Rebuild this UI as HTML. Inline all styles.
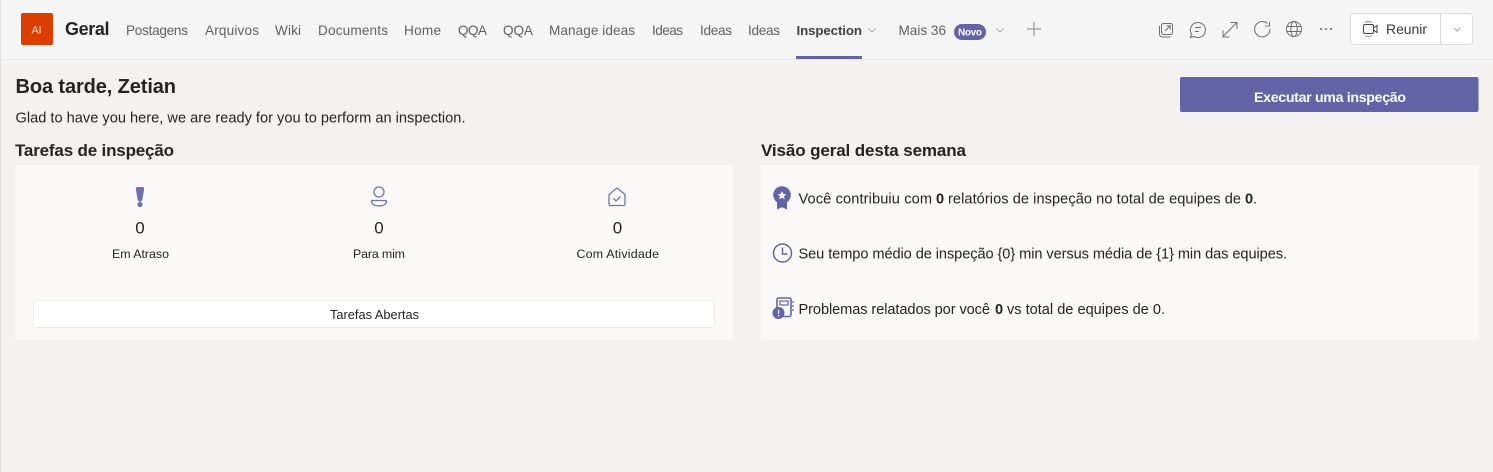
<!DOCTYPE html>
<html lang="pt">
<head>
<meta charset="utf-8">
<title>Geral - Inspection</title>
<style>
html,body{margin:0;padding:0;width:1493px;height:472px;overflow:hidden;background:#f3f2f1}
svg{display:block}
text{font-family:"Liberation Sans",Arial,sans-serif;white-space:pre}
.tab{font-size:13.6px;fill:#616161}
.b{font-weight:bold}
.d{fill:#252423}
.m{font-size:14.6px;fill:#252423}
.l{font-size:12.4px;fill:#252423}
.n{font-size:17px;fill:#252423;text-anchor:middle}
.ic{fill:none;stroke:#6e6e6e;stroke-width:1}
.ch{fill:none;stroke:#8f8f8f;stroke-width:.8}
.p{fill:none;stroke:#7172b3;stroke-width:1.3}
</style>
</head>
<body>
<svg width="1493" height="472" viewBox="0 0 1493 472" xmlns="http://www.w3.org/2000/svg">
<rect width="1493" height="472" fill="#f3f2f1"/>
<rect width="1493" height="59" fill="#f5f5f5"/>
<rect y="59" width="1493" height="1" fill="#e6e6e6"/>
<rect width="1" height="472" fill="#e0e0e0"/>

<rect x="21" y="13" width="32" height="32" rx="2" fill="#dc3e00"/>
<text x="31.500" y="33.500" font-size="11" fill="#fbe0d2" textLength="10">AI</text>
<text x="65" y="35" font-size="18" class="b" fill="#252423" textLength="44.500">Geral</text>

<text class="tab" x="126" y="35" textLength="62">Postagens</text>
<text class="tab" x="205" y="35" textLength="54">Arquivos</text>
<text class="tab" x="275" y="35" textLength="26">Wiki</text>
<text class="tab" x="318" y="35" textLength="70">Documents</text>
<text class="tab" x="404" y="35" textLength="37">Home</text>
<text class="tab" x="458" y="35" textLength="29">QQA</text>
<text class="tab" x="503" y="35" textLength="30">QQA</text>
<text class="tab" x="549" y="35" textLength="86">Manage ideas</text>
<text class="tab" x="652" y="35" textLength="31">Ideas</text>
<text class="tab" x="700" y="35" textLength="32">Ideas</text>
<text class="tab" x="748" y="35" textLength="32">Ideas</text>
<text x="796.500" y="35" font-size="13.300" class="b" fill="#424242" textLength="65.500">Inspection</text>
<path d="M868.500 28.500l3.500 3.500 3.500-3.500" class="ch"/>
<rect x="796" y="56" width="66" height="3" fill="#6264a7"/>
<text class="tab" x="898.500" y="35" textLength="47.500">Mais 36</text>
<rect x="954" y="24" width="32" height="16" rx="8" fill="#6264a7"/>
<text x="958" y="35.500" font-size="10" class="b" fill="#fff" textLength="24">Novo</text>
<path d="M996.500 28.500l3.500 3.500 3.500-3.500" class="ch"/>
<path d="M1034 22v14M1027 29h14" fill="none" stroke="#999" stroke-width="1.200"/>

<!-- toolbar icons -->
<g class="ic">
<rect x="1161.500" y="23.500" width="11" height="11" rx="2"/>
<path d="M1159.500 26v8a3 3 0 0 0 3 3h8"/>
<path d="M1165 31l5-5M1166.500 25.800h3.700v3.700"/>
<path d="M1198 22.500a7.500 7.500 0 1 1-3.800 14l-3.700 1 1-3.500a7.500 7.500 0 0 1 6.500-11.500z"/>
<path d="M1195 27.500h6M1195 31.500h4"/>
<path d="M1223 36.500l13.500-13.500M1230.500 22.500h6.500v6.500M1223 30.500v6.500h6.500"/>
<path d="M1267.500 23.500a7.700 7.700 0 1 0 2.500 5.500M1269.500 21.500v4.500h-4.500"/>
<circle cx="1294" cy="29" r="7.500"/>
<ellipse cx="1294" cy="29" rx="3.200" ry="7.500"/>
<path d="M1287 26.500h14M1287 31.500h14"/>
</g>
<circle cx="1321" cy="29" r="1" fill="#616161"/><circle cx="1326" cy="29" r="1" fill="#616161"/><circle cx="1331" cy="29" r="1" fill="#616161"/>

<!-- Reunir -->
<rect x="1350.500" y="13.500" width="122" height="31" rx="3" fill="#fff" stroke="#dcdcdc"/>
<rect x="1440" y="14" width="1" height="30" fill="#d6d6d6"/>
<rect x="1363.500" y="24.500" width="10" height="9" rx="1.500" fill="none" stroke="#424242"/>
<path d="M1373.500 28l3.500-2.500v7l-3.500-2.500" fill="none" stroke="#424242"/>
<path d="M1365 22.500a7 7 0 0 1 7 0M1365 35.500a7 7 0 0 0 7 0" fill="none" stroke="#8a8a8a"/>
<text x="1386" y="34" font-size="14" fill="#3a3a3a" textLength="41">Reunir</text>
<path d="M1453.500 27.500l3.500 3.500 3.500-3.500" class="ch"/>

<!-- heading -->
<text x="15.500" y="93" font-size="20" class="b d" textLength="160.500">Boa tarde, Zetian</text>
<text class="m" x="15.500" y="122.500" textLength="450">Glad to have you here, we are ready for you to perform an inspection.</text>
<rect x="1180" y="77" width="298.500" height="35" rx="2" fill="#6264a7"/>
<text x="1254" y="102" font-size="14.200" class="b" fill="#fff" textLength="152">Executar uma inspeção</text>

<text x="15" y="156" font-size="17" class="b d" textLength="159">Tarefas de inspeção</text>
<text x="761" y="156" font-size="17" class="b d" textLength="205">Visão geral desta semana</text>

<!-- left card -->
<rect x="15" y="165" width="718" height="175" rx="2" fill="#faf9f8"/>
<path d="M137.500 187h5a1.700 1.700 0 0 1 1.700 1.900l-1.800 10.400a2.400 2.400 0 0 1-4.800 0l-1.800-10.400a1.700 1.700 0 0 1 1.700-1.900z" fill="#6f70b0"/>
<circle cx="140" cy="204.500" r="2.600" fill="#6f70b0"/>
<circle cx="379" cy="192" r="5" class="p"/>
<path d="M372 200.500h14a.5.500 0 0 1 .5.500c0 3-3 5-7.500 5s-7.500-2-7.500-5a.5.500 0 0 1 .5-.5z" class="p"/>
<path d="M609 194.500l8-6.500 8 6.500v9.500a1.500 1.500 0 0 1-1.500 1.500h-13a1.500 1.500 0 0 1-1.500-1.500z" class="p" stroke-linejoin="round"/>
<path d="M613.500 198.500l2.500 2.500 4.500-4.500" class="p"/>
<text class="n" x="140" y="233.500">0</text>
<text class="n" x="379" y="233.500">0</text>
<text class="n" x="617.500" y="233.500">0</text>
<text class="l" x="112" y="258" textLength="57">Em Atraso</text>
<text class="l" x="353" y="258" textLength="52">Para mim</text>
<text class="l" x="576.500" y="258" textLength="82.500">Com Atividade</text>
<rect x="33.500" y="300.500" width="681" height="27" rx="2.500" fill="#fff" stroke="#edebe9"/>
<text x="330" y="319" font-size="12.800" fill="#252423" textLength="89">Tarefas Abertas</text>

<!-- right card -->
<rect x="761" y="165" width="717.500" height="175" rx="2" fill="#faf9f8"/>
<path d="M777 200v9.500l5-2.200 5 2.200v-9.500z" fill="#6264a7"/>
<circle cx="782" cy="195" r="8.800" fill="#6264a7"/>
<path d="M782 191l1.300 2.900 3 .3-2.300 2 .7 3-2.700-1.600-2.700 1.600.7-3-2.300-2 3-.3z" fill="#faf9f8"/>
<circle cx="782.500" cy="253" r="9" fill="none" stroke="#6264a7" stroke-width="1.500"/>
<path d="M782.500 247.500v6.500h5" fill="none" stroke="#6264a7" stroke-width="1.400"/>
<rect x="777" y="298" width="14" height="18.500" rx="2" fill="none" stroke="#6264a7" stroke-width="1.600"/>
<rect x="780" y="301" width="8" height="4" fill="none" stroke="#6264a7" stroke-width="1.200"/>
<path d="M793 301v2M793 305v2M793 309v2" stroke="#6264a7" stroke-width="1.200"/>
<circle cx="778.500" cy="313" r="6" fill="#6264a7"/>
<rect x="777.900" y="309.800" width="1.300" height="4" fill="#faf9f8"/>
<rect x="777.900" y="315" width="1.300" height="1.400" fill="#faf9f8"/>

<text class="m" x="798.500" y="203.500" textLength="133.500">Você contribuiu com</text>
<text class="m b" x="936" y="203.500">0</text>
<text class="m" x="948" y="203.500" textLength="293">relatórios de inspeção no total de equipes de</text>
<text class="m b" x="1245" y="203.500">0</text>
<text class="m" x="1253" y="203.500">.</text>
<text class="m" x="798.500" y="258.500" textLength="488.500">Seu tempo médio de inspeção {0} min versus média de {1} min das equipes.</text>
<text class="m" x="798.500" y="314" textLength="191.500">Problemas relatados por você</text>
<text class="m b" x="995" y="314">0</text>
<text class="m" x="1007" y="314" textLength="158">vs total de equipes de 0.</text>
</svg>
</body>
</html>
